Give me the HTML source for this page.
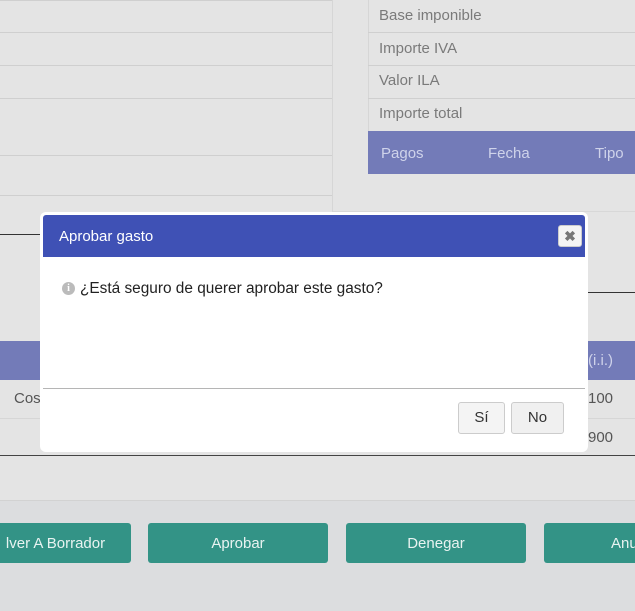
<!DOCTYPE html>
<html><head><style>
*{margin:0;padding:0;box-sizing:border-box}
body{width:635px;height:611px;overflow:hidden;background:#e4e4e4;font-family:"Liberation Sans",sans-serif;position:relative}
.a{position:absolute}
.hl{position:absolute;height:1px;background:#cfcfcf}
.t{position:absolute;color:#7a7a7a;font-size:15px}
.btn{position:absolute;top:523px;height:40px;background:#339386;color:#e8f3f1;font-size:15px;border-radius:3px;display:flex;align-items:center;justify-content:center}
</style></head><body>
<div class="hl" style="left:0;top:0;width:332px"></div>
<div class="hl" style="left:0;top:32px;width:332px"></div>
<div class="hl" style="left:0;top:65px;width:332px"></div>
<div class="hl" style="left:0;top:98px;width:332px"></div>
<div class="hl" style="left:0;top:155px;width:332px"></div>
<div class="hl" style="left:0;top:195px;width:332px"></div>
<div class="a" style="left:332px;top:0;width:1px;height:212px;background:#d6d6d6"></div>
<div class="a" style="left:368px;top:0;width:1px;height:131px;background:#d6d6d6"></div>
<div class="a" style="left:0;top:234px;width:40px;height:1px;background:#333"></div>
<div class="hl" style="left:368px;top:32px;width:267px"></div>
<div class="hl" style="left:368px;top:65px;width:267px"></div>
<div class="hl" style="left:368px;top:98px;width:267px"></div>
<div class="t" style="left:379px;top:7px">Base imponible</div>
<div class="t" style="left:379px;top:40px">Importe IVA</div>
<div class="t" style="left:379px;top:72px">Valor ILA</div>
<div class="t" style="left:379px;top:105px">Importe total</div>
<div class="a" style="left:368px;top:131px;width:267px;height:43px;background:#737bb8;color:#cfd3ea;font-size:15px">
<span class="a" style="left:13px;top:14px">Pagos</span><span class="a" style="left:120px;top:14px">Fecha</span><span class="a" style="left:227px;top:14px">Tipo</span></div>
<div class="hl" style="left:333px;top:211px;width:302px;background:#d8d8d8"></div>
<div class="a" style="left:588px;top:292px;width:47px;height:1px;background:#333"></div>
<div class="a" style="left:0;top:341px;width:635px;height:39px;background:#737bb8;color:#cfd3ea;font-size:15px"><span class="a" style="left:588px;top:11px">(i.i.)</span></div>
<div class="t" style="left:14px;top:390px;color:#555">Cos</div>
<div class="t" style="left:588px;top:390px;color:#555">100</div>
<div class="hl" style="left:0;top:418px;width:635px;background:#d6d6d6"></div>
<div class="t" style="left:588px;top:429px;color:#555">900</div>
<div class="a" style="left:0;top:455px;width:635px;height:1px;background:#444"></div>
<div class="a" style="left:0;top:500px;width:635px;height:111px;background:#dcdddf;border-top:1px solid #d2d2d2"></div>
<div class="btn" style="left:-20px;width:151px">lver A Borrador</div>
<div class="btn" style="left:148px;width:180px">Aprobar</div>
<div class="btn" style="left:346px;width:180px">Denegar</div>
<div class="btn" style="left:544px;width:120px;justify-content:flex-start;padding-left:67px">Anu</div>

<div class="a" style="left:40px;top:212px;width:548px;height:240px;background:#fff;border-radius:6px">
<div class="a" style="left:3px;top:3px;width:542px;height:42px;background:#3f51b5;border-radius:3px 3px 0 0;color:#fff;font-size:15px"><span class="a" style="left:16px;top:13px">Aprobar gasto</span>
<div class="a" style="left:515px;top:10px;width:24px;height:22px;background:#f4f4f4;border:1px solid #ccc;border-radius:3px;color:#777;font-size:14px;font-weight:bold;text-align:center;line-height:20px">✖</div></div>
<div class="a" style="left:22px;top:70px;width:13px;height:13px;border-radius:50%;background:#bbb;color:#fff;font-size:10px;font-weight:bold;text-align:center;line-height:13px;font-family:'Liberation Serif',serif">i</div>
<div class="a" style="left:40px;top:68px;font-size:15.4px;color:#222">¿Está seguro de querer aprobar este gasto?</div>
<div class="a" style="left:3px;top:176px;width:542px;height:1px;background:#b5b5b5"></div>
<div class="a" style="left:418px;top:190px;width:47px;height:32px;background:#f4f4f4;border:1px solid #ccc;border-radius:3px;font-size:15px;color:#333;text-align:center;line-height:30px">Sí</div>
<div class="a" style="left:471px;top:190px;width:53px;height:32px;background:#f0f0f0;border:1px solid #ccc;border-radius:3px;font-size:15px;color:#333;text-align:center;line-height:30px">No</div>
</div>
</body></html>
